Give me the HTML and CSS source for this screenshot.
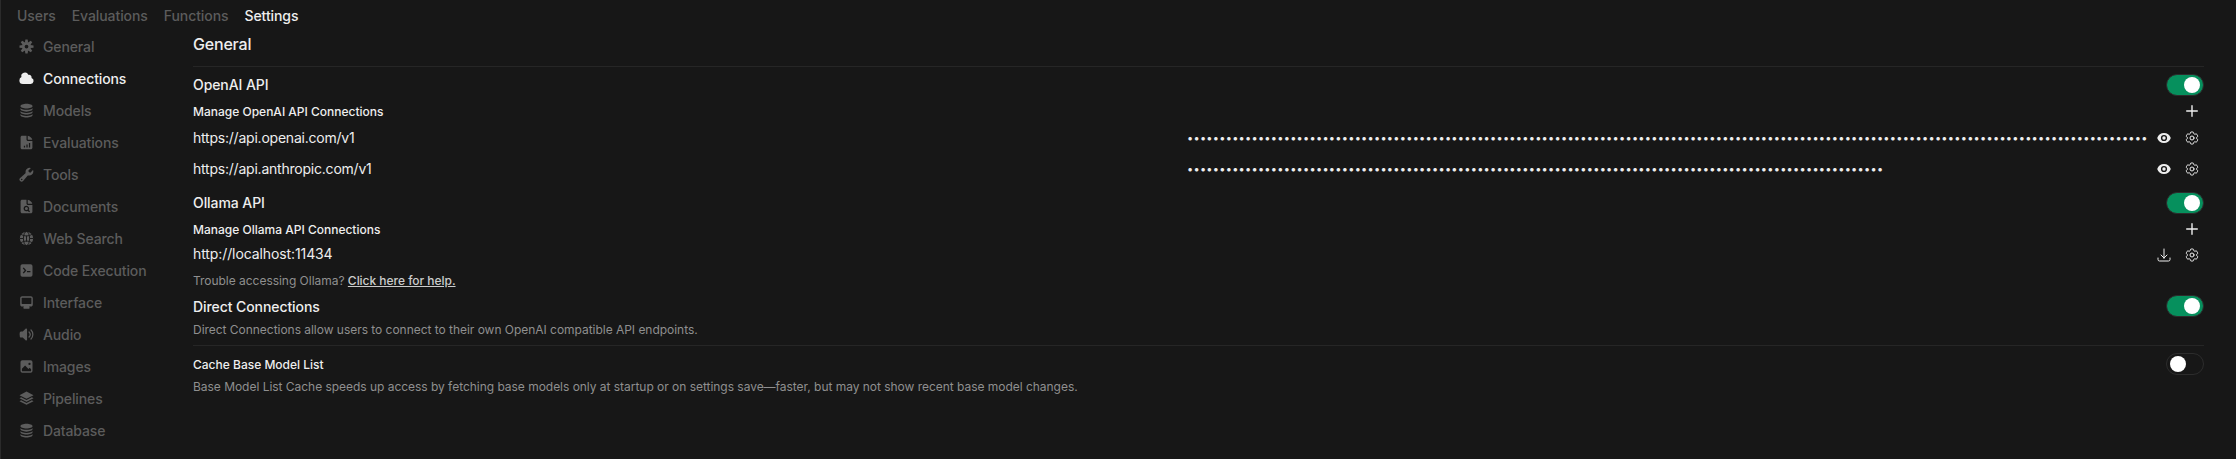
FILE: index.html
```html
<!DOCTYPE html>
<html lang="en">
<head>
<meta charset="utf-8">
<title>Settings</title>
<link rel="stylesheet" href="styles.css">
</head>
<body>
<svg class="defs" width="0" height="0">
  <symbol id="cog" viewBox="0 0 16 16"><g fill="currentColor"><path fill-rule="evenodd" d="M8 3.1a4.9 4.9 0 1 0 0 9.8 4.9 4.9 0 0 0 0-9.8zm0 2.9a2 2 0 1 1 0 4 2 2 0 0 1 0-4z"/><path id="tooth" d="M6.8.5h2.4l.5 3.3H6.3z"/><use href="#tooth" transform="rotate(45 8 8)"/><use href="#tooth" transform="rotate(90 8 8)"/><use href="#tooth" transform="rotate(135 8 8)"/><use href="#tooth" transform="rotate(180 8 8)"/><use href="#tooth" transform="rotate(225 8 8)"/><use href="#tooth" transform="rotate(270 8 8)"/><use href="#tooth" transform="rotate(315 8 8)"/></g></symbol>
  <symbol id="cloud" viewBox="0 0 16 16"><path fill="currentColor" d="M.4 10A3.800 3.800 0 0 0 4.200 13.800H12.400a3.300 3.300 0 0 0 1-6.400 2.750 2.750 0 0 0-3.500-3.300 3.850 3.850 0 0 0-7.300 2.400A3.850 3.850 0 0 0 .4 10Z"/></symbol>
  <symbol id="stack" viewBox="0 0 16 16"><path fill="currentColor" d="M8 .7c3.600 0 6.500 1.100 6.500 2.600S11.600 5.900 8 5.900 1.500 4.800 1.500 3.300 4.400.7 8 .7zM1.500 5.500C3 6.800 5.300 7.300 8 7.300s5-.5 6.500-1.800v1C14.500 8 11.600 9.200 8 9.200S1.500 8 1.500 6.500zM1.500 8.800C3 10.100 5.300 10.600 8 10.600s5-.5 6.500-1.800v.8c0 1.500-2.900 2.700-6.500 2.700s-6.500-1.200-6.500-2.700zM1.500 12c1.500 1.300 3.800 1.800 6.500 1.800s5-.5 6.500-1.800v.8c0 1.500-2.900 2.700-6.500 2.700s-6.500-1.200-6.500-2.700z"/></symbol>
  <symbol id="docchart" viewBox="0 0 16 16"><path fill="currentColor" fill-rule="evenodd" d="M3.300.7H8v4c0 .9.700 1.600 1.600 1.600h4.700v7.400c0 .9-.7 1.600-1.600 1.600H3.300c-.9 0-1.600-.7-1.600-1.600V2.300C1.700 1.400 2.400.7 3.300.7zM10.600 8.500v4.700h1.300V8.500zM7.900 10v3.200h1.300V10zM5.200 11.500v1.700h1.300v-1.700z"/><path fill="currentColor" d="M9.300.9c2.400.5 4.200 2.100 4.900 4.200H9.800a.5.5 0 0 1-.5-.5z"/></symbol>
  <symbol id="wrench" viewBox="0 0 16 16"><path fill="currentColor" fill-rule="evenodd" d="M15.300 4.700A4.300 4.300 0 0 1 10.300 9c-.5-.1-.9 0-1.200.4l-4.700 5.400A2.200 2.200 0 1 1 1.200 11.600l5.400-4.700c.4-.3.500-.7.400-1.200A4.300 4.300 0 0 1 12.700 1.100L9.900 3.900c.1.500.4 1 .8 1.400.4.400.9.700 1.400.8l2.800-2.800c.3.400.4.900.4 1.400zM2.900 12.400a.8.800 0 1 0 0 1.600.8.800 0 0 0 0-1.600z"/></symbol>
  <symbol id="docsearch" viewBox="0 0 16 16"><path fill="currentColor" fill-rule="evenodd" d="M3.300.7H8v4c0 .9.700 1.600 1.600 1.600h4.700v7.400c0 .9-.7 1.600-1.600 1.600H3.300c-.9 0-1.600-.7-1.600-1.600V2.300C1.700 1.400 2.400.7 3.300.7zM7.900 7.100a3 3 0 1 0 1.500 5.600l1.400 1.400 1-1-1.400-1.400a3 3 0 0 0-2.500-4.600zm0 1.400a1.600 1.600 0 1 1 0 3.200 1.600 1.600 0 0 1 0-3.200z"/><path fill="currentColor" d="M9.300.9c2.400.5 4.200 2.100 4.900 4.200H9.800a.5.5 0 0 1-.5-.5z"/></symbol>
  <symbol id="globe" viewBox="0 0 16 16"><circle cx="8" cy="8" r="7.100" fill="currentColor"/><g fill="none" stroke="#171717" stroke-width="1"><ellipse cx="8" cy="8" rx="3.300" ry="7.500"/><path d="M8 4.900v6.500M.8 8h4M11.200 8h4M2.200 3.600c3.600 2.200 8 2.200 11.600 0M2.200 12.400c3.600-2.200 8-2.200 11.600 0"/></g></symbol>
  <symbol id="terminal" viewBox="0 0 16 16"><path fill="currentColor" fill-rule="evenodd" d="M3.700 1.400h8.600c1.200 0 2.100.9 2.100 2.100v9c0 1.200-.9 2.100-2.100 2.100H3.700c-1.200 0-2.100-.9-2.100-2.100v-9c0-1.200.9-2.100 2.100-2.100zM4 5.700 6 8l-2 2.300 1.100.9L7.900 8 5.100 4.800zM8.500 8.400v1.400h3.700V8.400z"/></symbol>
  <symbol id="monitor" viewBox="0 0 16 16"><path fill="currentColor" fill-rule="evenodd" d="M3.300 1.300h9.400c1.100 0 2 .9 2 2v7c0 1.100-.9 2-2 2h-1.900l.5 1.100c.3.600-.1 1.200-.7 1.200H5.400c-.6 0-1-.6-.7-1.200l.5-1.100H3.300c-1.100 0-2-.9-2-2v-7c0-1.100.9-2 2-2zm0 1.500a.5.500 0 0 0-.5.500v5.800c0 .3.200.5.500.5h9.400c.3 0 .5-.2.500-.5V3.300a.5.500 0 0 0-.5-.5z"/></symbol>
  <symbol id="speaker" viewBox="0 0 16 16"><path fill="currentColor" d="M8.600 2.300v11.400c0 .7-.8 1-1.300.6L4 11.200H2.200c-.6 0-1.100-.3-1.300-.9a8 8 0 0 1 0-4.600c.2-.6.700-.9 1.300-.9H4l3.300-3.100c.5-.4 1.300-.1 1.300.6z"/><path d="M10.700 5.300a3.900 3.900 0 0 1 0 5.400M12.800 3.200a6.800 6.800 0 0 1 0 9.600" fill="none" stroke="currentColor" stroke-width="1.300" stroke-linecap="round"/></symbol>
  <symbol id="photo" viewBox="0 0 16 16"><path fill="currentColor" fill-rule="evenodd" d="M3.700 1.400h8.600c1.200 0 2.100.9 2.100 2.100v9c0 1.200-.9 2.100-2.100 2.100H3.700c-1.200 0-2.100-.9-2.100-2.100v-9c0-1.200.9-2.100 2.100-2.100zM3.100 10.300v2.200c0 .4.200.6.600.6h8.600c.4 0 .6-.2.600-.6v-1.700l-1.500-1.500-1.300 1.300L6.500 7zM11.200 4a1.200 1.200 0 1 0 0 2.400 1.200 1.200 0 0 0 0-2.400z"/></symbol>
  <symbol id="layers" viewBox="0 0 16 16"><path fill="currentColor" d="M8 .5l7.500 3.900L8 8.300.500 4.400zM2.300 6.600 8 9.600l5.700-3 1.800 1L8 11.500.5 7.600zM2.300 9.800 8 12.800l5.700-3 1.800 1L8 14.700.500 10.800z"/></symbol>
  <symbol id="plus" viewBox="0 0 16 16"><path d="M8 2.700v10.600M2.700 8h10.600" fill="none" stroke="currentColor" stroke-width="1.400" stroke-linecap="round"/></symbol>
  <symbol id="eye" viewBox="0 0 16 16"><path fill="currentColor" fill-rule="evenodd" d="M8 3c3.200 0 5.700 1.900 6.600 4.600.1.300.1.500 0 .8C13.700 11.100 11.200 13 8 13s-5.700-1.900-6.600-4.600a1.200 1.200 0 0 1 0-.8C2.300 4.900 4.800 3 8 3zm0 1.900a3.100 3.100 0 1 0 0 6.200 3.100 3.100 0 0 0 0-6.200z"/><circle cx="8" cy="8" r="1.700" fill="currentColor"/></symbol>
  <symbol id="gear" viewBox="0 0 24 24"><path fill="none" stroke="currentColor" stroke-width="1.500" stroke-linecap="round" stroke-linejoin="round" d="M9.594 3.940c.09-.542.56-.94 1.110-.94h2.593c.55 0 1.020.398 1.110.94l.213 1.281c.063.374.313.686.645.870.074.040.147.083.220.127.325.196.720.257 1.075.124l1.217-.456a1.125 1.125 0 0 1 1.370.490l1.296 2.247a1.125 1.125 0 0 1-.26 1.431l-1.003.827c-.293.241-.438.613-.430.992a7.723 7.723 0 0 1 0 .255c-.008.378.137.750.430.991l1.004.827c.424.350.534.955.260 1.430l-1.298 2.247a1.125 1.125 0 0 1-1.369.491l-1.217-.456c-.355-.133-.750-.072-1.076.124a6.470 6.470 0 0 1-.220.128c-.331.183-.581.495-.644.869l-.213 1.281c-.09.543-.56.940-1.110.940h-2.594c-.55 0-1.019-.398-1.110-.940l-.213-1.281c-.062-.374-.312-.686-.644-.870a6.520 6.520 0 0 1-.220-.127c-.325-.196-.720-.257-1.076-.124l-1.217.456a1.125 1.125 0 0 1-1.369-.490l-1.297-2.247a1.125 1.125 0 0 1 .260-1.431l1.004-.827c.292-.240.437-.613.430-.991a6.932 6.932 0 0 1 0-.255c.007-.380-.138-.751-.430-.992l-1.004-.827a1.125 1.125 0 0 1-.260-1.430l1.297-2.247a1.125 1.125 0 0 1 1.370-.491l1.216.456c.356.133.751.072 1.076-.124.072-.044.146-.086.220-.128.332-.183.582-.495.644-.869zM15 12a3 3 0 1 1-6 0 3 3 0 0 1 6 0z"/></symbol>
  <symbol id="download" viewBox="0 0 24 24"><path fill="none" stroke="currentColor" stroke-width="1.500" stroke-linecap="round" stroke-linejoin="round" d="M3 16.500v2.250A2.250 2.250 0 0 0 5.250 21h13.500A2.250 2.250 0 0 0 21 18.750V16.500M16.500 12 12 16.500m0 0L7.500 12m4.500 4.500V3"/></symbol>
</svg>
<div class="app">
  <nav class="tabs"><a>Users</a><a>Evaluations</a><a>Functions</a><a class="active">Settings</a></nav>
  <div class="body">
    <aside class="side">
      <a><svg><use href="#cog"/></svg><span>General</span></a>
      <a class="active"><svg><use href="#cloud"/></svg><span>Connections</span></a>
      <a><svg><use href="#stack"/></svg><span>Models</span></a>
      <a><svg><use href="#docchart"/></svg><span>Evaluations</span></a>
      <a><svg><use href="#wrench"/></svg><span>Tools</span></a>
      <a><svg><use href="#docsearch"/></svg><span>Documents</span></a>
      <a><svg><use href="#globe"/></svg><span>Web Search</span></a>
      <a><svg><use href="#terminal"/></svg><span>Code Execution</span></a>
      <a><svg><use href="#monitor"/></svg><span>Interface</span></a>
      <a><svg><use href="#speaker"/></svg><span>Audio</span></a>
      <a><svg><use href="#photo"/></svg><span>Images</span></a>
      <a><svg><use href="#layers"/></svg><span>Pipelines</span></a>
      <a><svg><use href="#stack"/></svg><span>Database</span></a>
    </aside>
    <main class="main">
      <h1 class="title">General</h1>
      <div class="row h-section"><h2>OpenAI API</h2><i class="switch on"></i></div>
      <div class="row h-manage"><h3>Manage OpenAI API Connections</h3><svg class="ic"><use href="#plus"/></svg></div>
      <div class="row h-url"><span class="url">https://api.openai.com/v1</span><span class="key" data-length="149"></span><span class="acts"><svg class="ic"><use href="#eye"/></svg><svg class="ic"><use href="#gear"/></svg></span></div>
      <div class="row h-url"><span class="url">https://api.anthropic.com/v1</span><span class="key" data-length="108"></span><span class="acts"><svg class="ic"><use href="#eye"/></svg><svg class="ic"><use href="#gear"/></svg></span></div>
      <div class="row h-ollama"><h2>Ollama API</h2><i class="switch on"></i></div>
      <div class="row h-manage2"><h3>Manage Ollama API Connections</h3><svg class="ic"><use href="#plus"/></svg></div>
      <div class="row h-local"><span class="url local">http://localhost:11434</span><span class="acts"><svg class="ic"><use href="#download"/></svg><svg class="ic"><use href="#gear"/></svg></span></div>
      <p class="row h-help">Trouble accessing Ollama?&nbsp;<a class="link">Click here for help.</a></p>
      <div class="row h-direct"><h2>Direct Connections</h2><i class="switch on"></i></div>
      <p class="row h-desc">Direct Connections allow users to connect to their own OpenAI compatible API endpoints.</p>
      <div class="row h-cache"><h3>Cache Base Model List</h3><i class="switch"></i></div>
      <p class="row h-note">Base Model List Cache speeds up access by fetching base models only at startup or on settings save—faster, but may not show recent base model changes.</p>
    </main>
  </div>
</div>
<script src="keys.js"></script>
</body>
</html>
```
FILE: keys.js
```js
document.querySelectorAll('.key').forEach(function (el) {
  el.textContent = '•'.repeat(Number(el.dataset.length));
});
```
FILE: styles.css
```css
* { box-sizing: border-box; margin: 0; padding: 0; }
body { background: #171717; color: #eee; font-family: Inter, "Liberation Sans", sans-serif; font-size: 14px; overflow: hidden; }
.defs { display: block; }
.app { height: 459px; border-left: 1px solid #2b2b2b; }
.tabs { display: flex; height: 30px; line-height: 32px; padding-left: 16px; gap: 16px; font-weight: 500; letter-spacing: -0.08px; color: #5c5c5c; }
.tabs .active, .side .active { color: #eee; }
.body { display: flex; }
.side { width: 192px; padding-left: 18px; color: #5c5c5c; font-weight: 500; letter-spacing: -0.12px; }
.side a { display: flex; align-items: center; height: 32px; gap: 9px; }
.side svg { width: 15px; height: 15px; flex: none; }
.main { width: 2011px; }
.title { height: 37px; line-height: 28px; font-size: 16px; font-weight: 500; letter-spacing: -0.2px; border-bottom: 1px solid #262626; }
.row { display: flex; align-items: center; justify-content: space-between; }
h2 { font-size: 14px; font-weight: 500; letter-spacing: -0.08px; }
h3 { font-size: 12px; font-weight: 500; }
p { font-size: 12px; color: #8f8f8f; letter-spacing: -0.03px; }
.row.h-help { justify-content: flex-start; }
.link { color: #ccc; font-weight: 500; text-decoration: underline; }
.switch { width: 38px; height: 22px; border-radius: 11px; border: 1px solid #2c2c2c; padding: 2px 3px; display: flex; }
.switch::after { content: ""; width: 16px; height: 16px; border-radius: 50%; background: #fff; }
.switch.on { background: #06905d; justify-content: flex-end; }
.ic { width: 16px; height: 16px; display: block; }
.row > .ic { margin-right: 4px; }
.url { width: 994px; letter-spacing: -0.22px; }
.local { letter-spacing: -0.1px; padding-bottom: 2px; }
.key { flex: 1; white-space: nowrap; font-size: 11px; letter-spacing: 0.26px; }
.acts { display: flex; gap: 12px; margin-right: 4px; }
.h-section { height: 35px; }
.h-manage { height: 20px; padding-bottom: 2px; }
.h-url { height: 31px; }
.h-ollama { height: 36px; }
.h-ollama .switch { margin-top: 2px; }
.h-manage2 { height: 19px; padding-bottom: 1px; }
.h-local { height: 31px; }
.h-help { height: 21px; }
.h-direct { height: 30px; }
.h-desc { height: 24px; padding-bottom: 8px; }
.h-cache { height: 37px; border-top: 1px solid #262626; }
.h-note { height: 8px; }
```
